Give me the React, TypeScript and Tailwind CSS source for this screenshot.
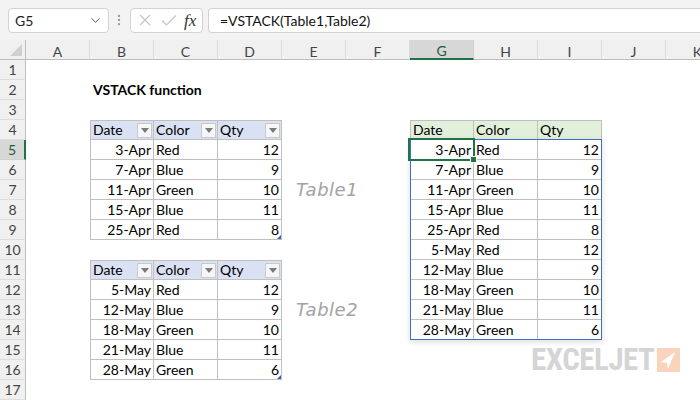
import { Fragment } from "react"
import { ChevronDown, EllipsisVertical } from "lucide-react"

type Row = [string, string, number]

const cols = ["A", "B", "C", "D", "E", "F", "G", "H", "I", "J", "K"]
const rows = Array.from({ length: 17 }, (_, i) => i + 1)

const table1: Row[] = [
  ["3-Apr", "Red", 12],
  ["7-Apr", "Blue", 9],
  ["11-Apr", "Green", 10],
  ["15-Apr", "Blue", 11],
  ["25-Apr", "Red", 8],
]

const table2: Row[] = [
  ["5-May", "Red", 12],
  ["12-May", "Blue", 9],
  ["18-May", "Green", 10],
  ["21-May", "Blue", 11],
  ["28-May", "Green", 6],
]

const stacked = [...table1, ...table2]

// which block (if any) a cell belongs to
function blockOf(r: number, c: number) {
  if (c >= 1 && c <= 3 && r >= 4 && r <= 9) return { top: 4, first: 1, data: table1, head: "blue" }
  if (c >= 1 && c <= 3 && r >= 11 && r <= 16) return { top: 11, first: 1, data: table2, head: "blue" }
  if (c >= 6 && c <= 8 && r >= 4 && r <= 14) return { top: 4, first: 6, data: stacked, head: "green" }
  return null
}

function FilterButton() {
  return (
    <span className="flex h-[15px] w-[15px] items-center justify-center border border-[#c9c9c9] bg-[#f6f6f6]">
      <svg width="8" height="5" viewBox="0 0 8 5">
        <path d="M0 0h8L4 5z" fill="#7a7a7a" />
      </svg>
    </span>
  )
}

function SheetCell({ r, c }: { r: number; c: number }) {
  const block = blockOf(r, c)

  if (r === 2 && c === 1) {
    return <div className="whitespace-nowrap pl-[3px] font-bold leading-[20px]">VSTACK function</div>
  }
  if (c === 4 && (r === 7 || r === 13)) {
    return (
      <div className="whitespace-nowrap pl-[14px] font-['DejaVu_Sans',sans-serif] text-[18px] font-light italic leading-[20px] tracking-[0.5px] text-[#a3a3a3]">
        {r === 7 ? "Table1" : "Table2"}
      </div>
    )
  }
  if (!block) return <div />

  const col = c - block.first
  const isHead = r === block.top
  const edges = `border-r border-b border-[#bfbfbf] ${col === 0 ? "border-l" : ""} ${isHead ? "border-t" : ""}`

  if (isHead) {
    const label = ["Date", "Color", "Qty"][col]
    return (
      <div className={`flex items-center justify-between pl-[2px] pr-[1px] leading-[20px] ${edges} ${block.head === "blue" ? "bg-[#d9e1f2]" : "bg-[#e2efda]"}`}>
        <span>{label}</span>
        {block.head === "blue" && <FilterButton />}
      </div>
    )
  }

  const item = block.data[r - block.top - 1]
  const isLast = r - block.top === block.data.length
  return (
    <div className={`relative leading-[20px] ${edges} ${col === 1 ? "pl-[2px] text-left" : "pr-[2px] text-right"}`}>
      {item[col]}
      {block.head === "blue" && isLast && col === 2 && (
        <svg className="absolute bottom-0 right-0" width="4" height="4" viewBox="0 0 4 4">
          <path d="M4 0v4H0z" fill="#3b5bb5" />
        </svg>
      )}
    </div>
  )
}

export default function App() {
  return (
    <div className="relative h-[400px] w-[700px] overflow-hidden bg-white font-['Lato','Liberation_Sans',sans-serif] text-[14px] text-black">
      <div className="flex h-[40px] items-center bg-[#f3f3f3] pl-[8px]">
        <div className="flex h-[25px] w-[101px] items-center justify-between rounded-[4px] border border-[#d3d3d3] bg-white pl-[6px] pr-[5px] text-[14px] text-[#222]">
          G5
          <ChevronDown className="h-[15px] w-[15px] text-[#555]" strokeWidth={1.6} />
        </div>
        <EllipsisVertical className="ml-[3px] mr-[4px] h-[14px] w-[14px] text-[#9a9a9a]" strokeWidth={2} />
        <div className="flex h-[25px] w-[73px] items-center rounded-[4px] border border-[#d3d3d3] bg-white pl-[5px]">
          <svg width="16" height="16" viewBox="0 0 16 16" className="ml-[1px]">
            <path d="M3 3l10 10M13 3L3 13" stroke="#c4c4c4" strokeWidth="1.2" fill="none" />
          </svg>
          <svg width="18" height="16" viewBox="0 0 18 16" className="ml-[7px]">
            <path d="M2 8.5l4.5 4.5L16 3.5" stroke="#c4c4c4" strokeWidth="1.2" fill="none" />
          </svg>
          <span className="ml-[6px] font-['Liberation_Serif',serif] text-[17px] italic leading-none text-[#333]">fx</span>
        </div>
        <div className="ml-[5px] flex h-[25px] flex-1 items-center rounded-l-[4px] border border-r-0 border-[#d3d3d3] bg-white pl-[11px] text-[14px] text-[#111]">
          =VSTACK(Table1,Table2)
        </div>
      </div>

      <div className="relative grid auto-rows-[20px] grid-cols-[26px_repeat(11,64px)]">
        <div className="relative border-b border-r border-[#bdbdbd] bg-[#f0f0f0]">
          <svg className="absolute bottom-[3px] right-[3px]" width="12" height="12" viewBox="0 0 12 12">
            <path d="M12 0v12H0z" fill="#cfcfcf" />
          </svg>
        </div>
        {cols.map((letter) =>
          letter === "G" ? (
            <div key={letter} className="flex items-center justify-center border-b-2 border-r border-b-[#217346] border-r-[#cfcfcf] bg-[#d7d7d7] pt-[3px] text-[14px] text-[#1e5e3a]">
              {letter}
            </div>
          ) : (
            <div key={letter} className="flex items-center justify-center border-b border-r border-b-[#bdbdbd] border-r-[#dadada] bg-[#f0f0f0] pt-[3px] text-[14px] text-[#444]">
              {letter}
            </div>
          )
        )}
        {rows.map((r) => (
          <Fragment key={r}>
            {r === 5 ? (
              <div className="flex items-center justify-center border-b border-r-2 border-b-[#d0d0d0] border-r-[#217346] bg-[#d7d7d7] text-[14px] text-[#1e5e3a]">
                {r}
              </div>
            ) : (
              <div className="flex items-center justify-center border-b border-r border-b-[#dedede] border-r-[#bdbdbd] bg-[#f0f0f0] text-[14px] text-[#444]">
                {r}
              </div>
            )}
            {cols.map((letter, c) => (
              <SheetCell key={letter} r={r} c={c} />
            ))}
          </Fragment>
        ))}

        {/* spill range outline */}
        <div className="pointer-events-none absolute left-[410px] top-[99px] h-[201px] w-[192px] border border-[#3f6fc4] shadow-[0_2px_6px_rgba(0,0,0,0.14)]" />
        {/* active cell */}
        <div className="pointer-events-none absolute left-[408px] top-[98px] h-[23px] w-[67px] border-2 border-[#217346]">
          <span className="absolute bottom-[-4px] right-[-4px] h-[7px] w-[7px] border border-white bg-[#217346]" />
        </div>
      </div>

      <div className="absolute left-[531px] top-[344px] flex items-center gap-[3px]">
        <span className="font-['Liberation_Sans_Narrow','Roboto_Condensed','Liberation_Sans',sans-serif] text-[31px] font-bold leading-none tracking-[-0.5px] text-[#d5d5d5]">
          EXCELJET
        </span>
        <svg width="23" height="24" viewBox="0 0 23 24">
          <rect width="23" height="24" fill="#f9d4bb" />
          <path d="M18 4L4 14l6 1 1 6z" fill="#fff" />
        </svg>
      </div>
    </div>
  )
}
